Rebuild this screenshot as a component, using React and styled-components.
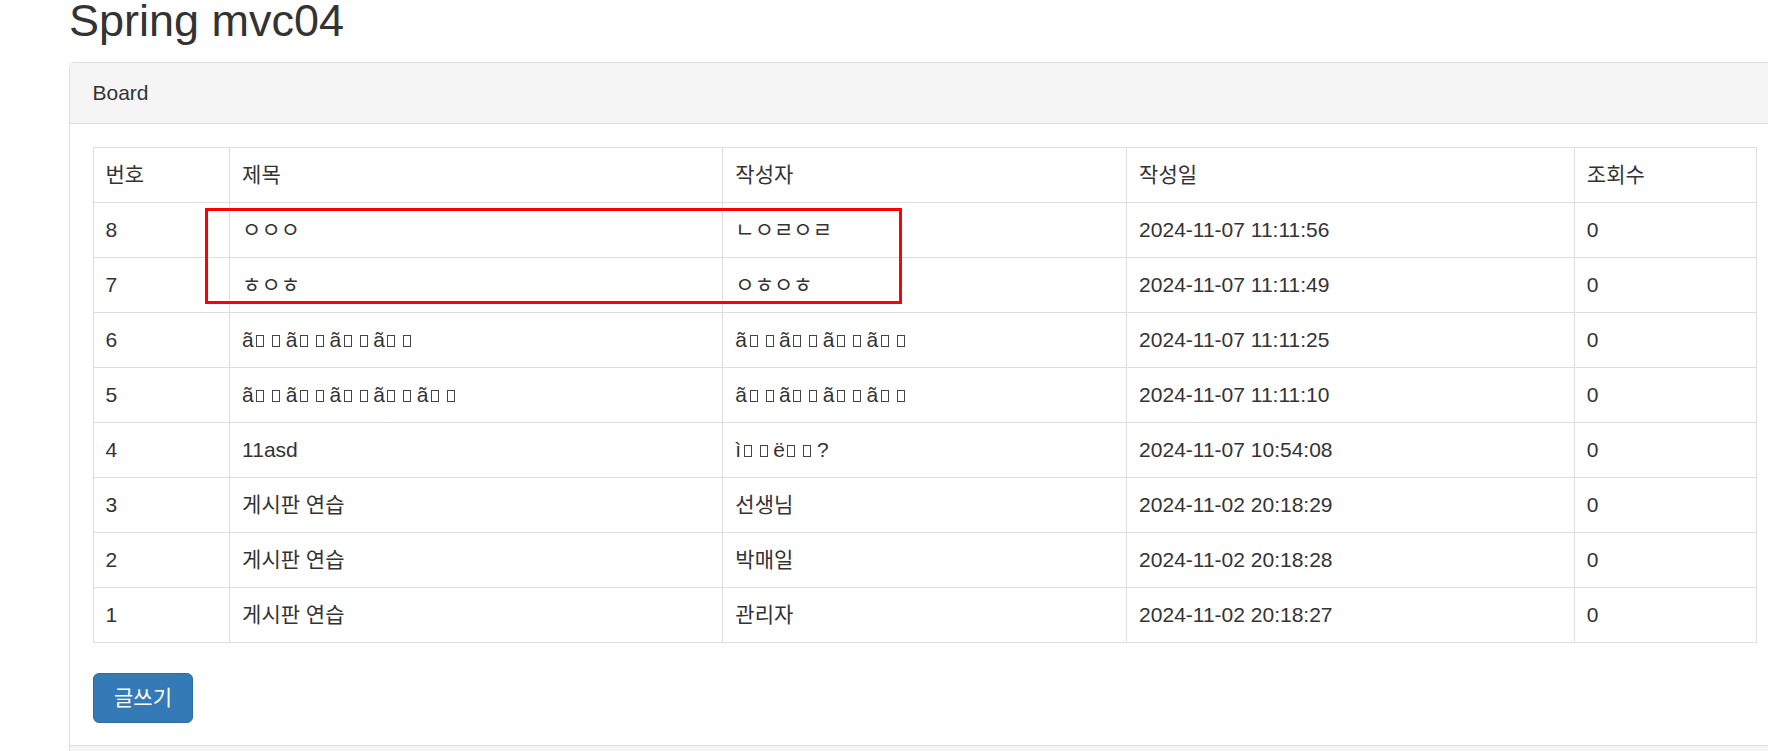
import React from "react";
import styled, { createGlobalStyle } from "styled-components";

const Global = createGlobalStyle`
  html, body {
    margin: 0;
    padding: 0;
    overflow: hidden;
    background: #fff;
  }
  body {
    font-family: "Liberation Sans", Arial, "Noto Sans CJK KR", sans-serif;
    font-size: 21px;
    line-height: 30px;
    color: #333;
  }
`;

const Page = styled.div`
  padding-left: 69px;
  width: 1720px;
`;

const Title = styled.h2`
  margin: 0 0 20.5px;
  font-size: 45px;
  line-height: 41.5px;
  font-weight: 500;
  color: #333;
`;

const Panel = styled.div`
  width: 1709.5px;
  border: 1px solid #ddd;
  border-radius: 6px;
  background: #fff;
  overflow: hidden;
`;

const PanelHeading = styled.div`
  padding: 15px 22.5px;
  background: #f5f5f5;
  border-bottom: 1px solid #ddd;
  color: #333;
`;

const PanelBody = styled.div`
  padding: 22.5px;
`;

const PanelFooter = styled.div`
  height: 40px;
  background: #f5f5f5;
  border-top: 1px solid #ddd;
`;

const TableWrap = styled.div`
  position: relative;
  margin-bottom: 30px;
`;

const Table = styled.table`
  width: 100%;
  border-collapse: collapse;
  table-layout: fixed;
  border-spacing: 0;
`;

const Cell = styled.td`
  padding: 12px;
  border: 1px solid #ddd;
  line-height: 30px;
  vertical-align: top;
  text-align: left;
  font-weight: normal;
  white-space: nowrap;
  overflow: hidden;
`;

const Tofu = styled.span`
  display: inline-block;
  width: 8px;
  height: 12px;
  box-sizing: border-box;
  border: 1px solid #444;
  margin: 0 5.5px 0 2.5px;
`;

const Highlight = styled.div`
  position: absolute;
  left: 112.5px;
  top: 61.5px;
  width: 697px;
  height: 96px;
  box-sizing: border-box;
  border: 3px solid #ff0000;
  pointer-events: none;
`;

const WriteButton = styled.button`
  font-family: inherit;
  font-size: 21px;
  line-height: 30px;
  padding: 9px 20.5px;
  color: #fff;
  background: #337ab7;
  border: 1px solid #2e6da4;
  border-radius: 6px;
  cursor: pointer;
`;

const columns = [136.5, 493, 403.5, 447.5, 182];
const headers = ["번호", "제목", "작성자", "작성일", "조회수"];

const rows = [
  ["8", "ㅇㅇㅇ", "ㄴㅇㄹㅇㄹ", "2024-11-07 11:11:56", "0"],
  ["7", "ㅎㅇㅎ", "ㅇㅎㅇㅎ", "2024-11-07 11:11:49", "0"],
  ["6", "ã□□ã□□ã□□ã□□", "ã□□ã□□ã□□ã□□", "2024-11-07 11:11:25", "0"],
  ["5", "ã□□ã□□ã□□ã□□ã□□", "ã□□ã□□ã□□ã□□", "2024-11-07 11:11:10", "0"],
  ["4", "11asd", "ì□□ë□□?", "2024-11-07 10:54:08", "0"],
  ["3", "게시판 연습", "선생님", "2024-11-02 20:18:29", "0"],
  ["2", "게시판 연습", "박매일", "2024-11-02 20:18:28", "0"],
  ["1", "게시판 연습", "관리자", "2024-11-02 20:18:27", "0"],
];

function Garbled({ text }) {
  const parts = [];
  let buf = "";
  [...text].forEach((ch, i) => {
    if (ch === "□") {
      if (buf) parts.push(buf);
      buf = "";
      parts.push(<Tofu key={i} aria-label="□" />);
    } else {
      buf += ch;
    }
  });
  if (buf) parts.push(buf);
  return <>{parts}</>;
}

export default function App() {
  return (
    <>
      <Global />
      <Page>
        <Title>Spring mvc04</Title>
        <Panel>
          <PanelHeading>Board</PanelHeading>
          <PanelBody>
            <TableWrap>
              <Table>
                <colgroup>
                  {columns.map((w, i) => (
                    <col key={i} style={{ width: w }} />
                  ))}
                </colgroup>
                <thead>
                  <tr>
                    {headers.map((h) => (
                      <Cell as="th" key={h}>
                        {h}
                      </Cell>
                    ))}
                  </tr>
                </thead>
                <tbody>
                  {rows.map((r) => (
                    <tr key={r[0]}>
                      {r.map((c, i) => (
                        <Cell key={i}>
                          <Garbled text={c} />
                        </Cell>
                      ))}
                    </tr>
                  ))}
                </tbody>
              </Table>
              <Highlight />
            </TableWrap>
            <WriteButton type="button">글쓰기</WriteButton>
          </PanelBody>
          <PanelFooter />
        </Panel>
      </Page>
    </>
  );
}
